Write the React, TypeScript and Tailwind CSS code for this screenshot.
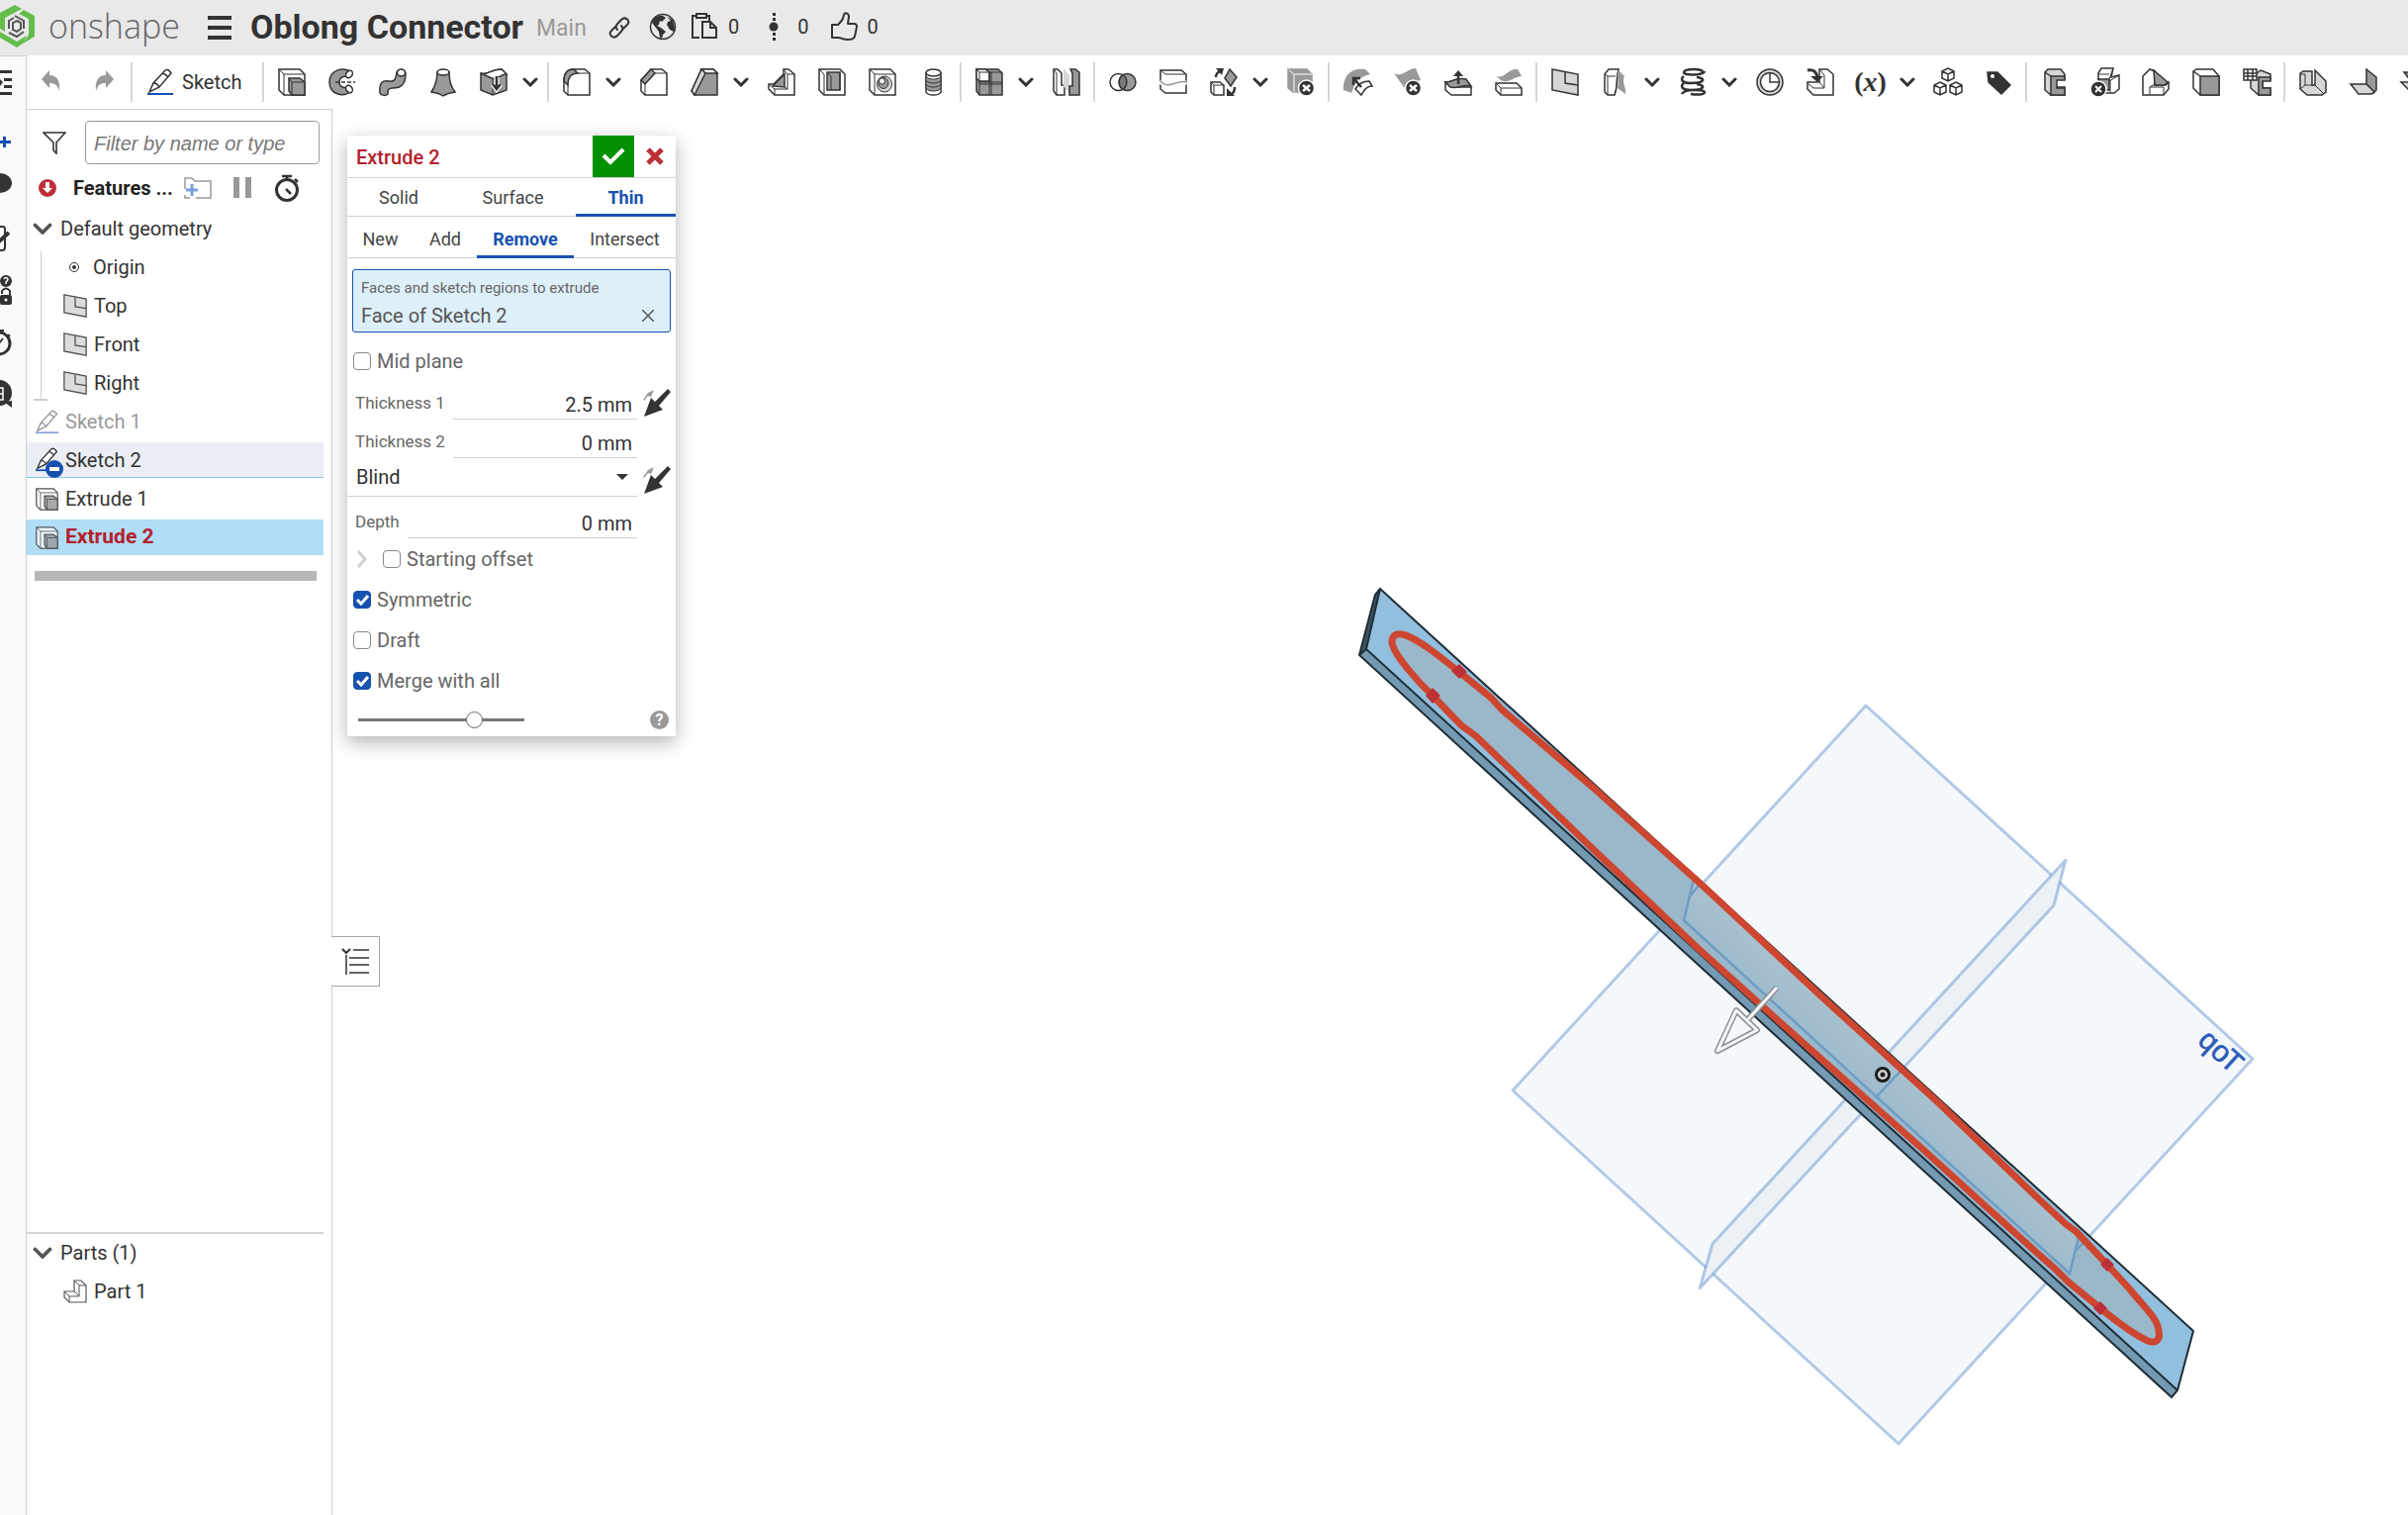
import { useState } from 'react'
import type { ReactNode } from 'react'

const DARK = '#333333'
const MID = '#999999'
const LIGHT = '#d6d6d6'

// Toolbar drawings share a 28 x 28 grid.
const ICONS: Record<string, ReactNode> = {
  undo: <path d="M3 11 L11 2 V7 C19 7 22 13 21 23 C19 17 17 15 11 15 V20 Z" fill={MID} stroke="none" />,
  redo: <path d="M25 11 L17 2 V7 C9 7 6 13 7 23 C9 17 11 15 17 15 V20 Z" fill={MID} stroke="none" />,
  extrude: (
    <>
      <path d="M1 1 H22 L27 6 V27 H6 L1 22 Z" fill="#fff" />
      <path d="M1 1 L6 6 V27 M6 6 H27" strokeWidth="1" />
      <path d="M11 10 H22 L27 14 V27 H14 L11 23 Z" fill={MID} />
      <path d="M11 10 L14 14 V27 M14 14 H26" strokeWidth="1" />
    </>
  ),
  revolve: (
    <>
      <path d="M20 9 L22 3 C15 -1 1 1 1 14 C1 27 15 29 22 24 L20 18 C17 21 11 19 11 14 C11 9 16 7 20 9 Z" fill={MID} />
      <ellipse cx="21" cy="6" rx="3" ry="4" fill="#fff" transform="rotate(35 21 6)" />
      <ellipse cx="21" cy="21" rx="3" ry="4" fill="#fff" transform="rotate(-35 21 21)" />
      <path d="M7 14 H27" strokeDasharray="4 2" />
    </>
  ),
  sweep: (
    <>
      <path d="M1 25 C0 14 4 12 10 13 C16 14 17 11 18 4 C20 0 26 1 27 5 C27 17 22 20 14 20 C9 20 9 22 9 26 C7 28 2 28 1 25 Z" fill={MID} />
      <ellipse cx="22.500" cy="4.500" rx="4" ry="3.500" fill="#fff" />
    </>
  ),
  loft: (
    <>
      <path d="M8 4 C8 12 6 18 2 24 C9 25 11 26 14 28 C17 26 20 25 26 24 C21 18 20 12 20 4 Z" fill={MID} />
      <ellipse cx="14" cy="4" rx="6" ry="3" fill="#fff" />
    </>
  ),
  thicken: (
    <>
      <path d="M1 5 C7 8 10 1 22 1 L27 6 V22 L13 27 L1 22 Z" fill={MID} />
      <path d="M1 5 C7 8 10 1 22 1 L27 6 C20 6 19 12 12 10 Z" fill="#fff" />
      <path d="M13 10 V27" strokeWidth="1" />
      <path d="M17 9 V20 M13 16 L17 21 L21 16" stroke="#fff" strokeWidth="5" />
      <path d="M17 8 V20 M13 16 L17 21 L21 16" strokeWidth="2.500" />
    </>
  ),
  fillet: (
    <>
      <path d="M1 13 C1 5 5 1 11 1 H22 L27 5 V27 H5 L1 23 Z" fill="#fff" />
      <path d="M1 13 C1 5 5 1 11 1 L15 5 C8 5 5 10 5 17 Z" fill={MID} />
      <path d="M5 27 V17 M15 5 H27" strokeWidth="1" />
    </>
  ),
  chamfer: (
    <>
      <path d="M1 12 L11 1 H22 L27 5 V27 H5 L1 23 Z" fill="#fff" />
      <path d="M1 12 L11 1 L15 5 L5 16 Z" fill={MID} />
      <path d="M5 27 V16 M15 5 H27" strokeWidth="1" />
    </>
  ),
  draft: (
    <>
      <path d="M1 23 L11 1 H23 L27 5 V27 H4 Z" fill={MID} />
      <path d="M11 1 H23 L27 5 H15 Z" fill="#fff" />
      <path d="M1 23 L11 1 L15 5 L4 27 Z" fill={LIGHT} />
    </>
  ),
  rib: (
    <>
      <path d="M1 16 H6 L16 6 V1 H21 L27 6 V27 H7 L1 21 Z" fill="#fff" />
      <path d="M5 18 L17 6 V19 Z" fill={MID} />
      <path d="M7 27 V21 H20 V6 M17 19 L20 21 M1 16 L7 21 M16 1 L20 6 H27" strokeWidth="1" />
    </>
  ),
  shell: (
    <>
      <path d="M1 1 H22 L27 6 V27 H6 L1 22 Z" fill="#fff" />
      <path d="M1 1 L6 6 V27" strokeWidth="1" />
      <path d="M9 4 H22 V22 H9 Z" fill={MID} />
      <path d="M9 4 L13 8 V22 M22 4 V22" strokeWidth="1" />
    </>
  ),
  hole: (
    <>
      <path d="M1 1 H22 L27 6 V27 H6 L1 22 Z" fill="#fff" />
      <path d="M1 1 L6 6 V27 M6 6 H27" strokeWidth="1" />
      <ellipse cx="16" cy="16" rx="7.500" ry="8" fill={LIGHT} strokeWidth="1" />
      <ellipse cx="15" cy="15" rx="5" ry="5.500" fill={MID} strokeWidth="1" />
      <circle cx="13.500" cy="13" r="3" fill="#fff" strokeWidth="1" />
    </>
  ),
  thread: (
    <>
      <path d="M7 5 V24 C9 28 20 28 22 24 V5 Z" fill="#fff" />
      <path d="M7 8 C9 12 20 12 22 8 V20 C20 24 9 24 7 20 Z" fill={MID} strokeWidth="1" />
      <path d="M7 12 C9 16 20 16 22 12 M7 16 C9 20 20 20 22 16" strokeWidth="1" />
      <ellipse cx="14.500" cy="4.500" rx="7.500" ry="3.500" fill="#fff" />
    </>
  ),
  pattern: (
    <>
      <path d="M1 1 H23 L27 5 V27 H4 L1 23 Z" fill={MID} />
      <path d="M1 1 H10 L14 4 V13 H4 L1 10 Z" fill="#fff" />
      <path d="M4 27 V4 H27 M1 1 L4 4 M14 4 V27 M16 4 V27 M3 14 H27 M4 16 H27" strokeWidth="1" />
    </>
  ),
  mirror: (
    <>
      <path d="M1 1 H5 L9 5 V17 H12 V27 H4 L1 23 Z" fill="#fff" />
      <path d="M1 1 L4 5 V27" strokeWidth="1" />
      <path d="M11 0 L17 7 V26 L11 18 Z" fill={LIGHT} stroke="none" />
      <path d="M18 1 H23 L27 4 V27 H17 V18 H20 V5 Z" fill={MID} />
    </>
  ),
  boolean: (
    <>
      <circle cx="9.500" cy="14" r="8.500" fill="#fff" />
      <circle cx="18.500" cy="14" r="8.500" fill={MID} />
      <path d="M14 6.500 C19 10 19 18 14 21.500 C9 18 9 10 14 6.500 Z" fill="#7b7b7b" />
    </>
  ),
  split: (
    <>
      <path d="M1 2 H22 L27 6 V25 H6 L1 21 Z" fill="#fff" />
      <path d="M1 2 L6 6 H27" strokeWidth="1" />
      <path d="M0 13 C10 24 16 11 28 15" stroke="#fff" strokeWidth="4" />
      <path d="M0 12 C10 23 16 11 28 14" stroke={MID} />
    </>
  ),
  transform: (
    <>
      <path d="M20 1 L27 9 L21 18 L15 10 Z" fill={MID} />
      <path d="M1 14 H10 L14 17 V27 H4 L1 24 Z" fill="#fff" />
      <path d="M1 14 L4 17 V27 M4 17 H14" strokeWidth="1" />
      <path d="M6 9 C6 5 8 4 10 3 M22 26 C25 24 25 22 25 19" strokeWidth="2.500" />
      <path d="M6 0 H14 L12 7 Z M17 20 V28 H25 Z" fill={DARK} stroke="none" />
    </>
  ),
  deletePart: (
    <>
      <path d="M1 1 H20 L25 6 V24 H6 L1 20 Z" fill={MID} stroke={MID} />
      <path d="M2 2 L7 6 H25 M7 6 V24" stroke="#fff" strokeWidth="1" />
      <circle cx="19.500" cy="20" r="8" fill={DARK} stroke="#fff" />
      <path d="M16 17 L23 23 M23 17 L16 23" stroke="#fff" strokeWidth="2.500" />
    </>
  ),
  modifyFillet: (
    <>
      <path d="M0 22 C-1 6 10 -1 22 1 L27 6 C15 9 12 14 8 25 Z" fill={MID} stroke="none" />
      <path d="M12 21 C15 16 20 13 26 13 L29 18 C23 18 21 22 18 27 Z" fill="#fff" />
      <path d="M10 10 L18 19 M10 17 V10 H17" strokeWidth="2.500" />
    </>
  ),
  deleteFace: (
    <>
      <path d="M0 5 C8 10 14 0 22 0 L27 12 C20 13 18 20 10 19 Z" fill={MID} stroke="none" />
      <circle cx="19.500" cy="20" r="8" fill={DARK} stroke="#fff" />
      <path d="M16 17 L23 23 M23 17 L16 23" stroke="#fff" strokeWidth="2.500" />
    </>
  ),
  moveFace: (
    <>
      <path d="M1 14 L7 19 H27 V27 H7 L1 22 Z" fill="#fff" />
      <path d="M1 14 C8 14 10 9 22 11 L27 18 C18 16 14 21 6 19 Z" fill={MID} />
      <path d="M14 16 V5" strokeWidth="2.500" />
      <path d="M9 8 L14 2 L19 8 Z" fill={DARK} stroke="none" />
    </>
  ),
  replaceFace: (
    <>
      <path d="M1 8 C10 11 13 0 23 1 L27 8 C18 9 14 16 6 12 Z" fill={MID} stroke="none" />
      <path d="M1 15 H22 L27 20 V27 H6 L1 22 Z" fill="#fff" />
      <path d="M1 15 L6 20 V27 M6 20 H27" strokeWidth="1" />
    </>
  ),
  plane: (
    <>
      <path d="M1 1 L27 6 V27 L1 22 Z" fill={LIGHT} />
      <path d="M14 4 V15 L27 17" fill="none" />
    </>
  ),
  frame: (
    <>
      <path d="M3 6 L7 1 H17 C14 10 17 16 13 27 H6 L3 24 Z" fill="#fff" />
      <path d="M17 2 L23 8 C20 14 25 19 24 26 L16 20 C18 12 14 10 17 2 Z" fill={MID} stroke="none" />
      <path d="M3 6 L6 8 H14 M6 8 V27" strokeWidth="1" />
    </>
  ),
  helix: (
    <path
      d="M24 4 C25 0 6 0 5 4 C4 8 26 7 26 3 M5 8 C1 11 3 15 12 15 C27 15 27 10 18 9 M5 15 C1 18 3 22 12 22 C27 22 27 17 18 16 M3 26 C5 21 25 21 26 24 C26 27 18 27 12 26"
      fill="none"
      strokeWidth="2.500"
    />
  ),
  composite: (
    <>
      <circle cx="14" cy="14" r="13" fill={LIGHT} />
      <circle cx="14" cy="14" r="9.500" fill="#fff" />
      <path d="M14 5 V14 H23" fill="none" />
    </>
  ),
  derived: (
    <>
      <path d="M1 14 H13 V1 H21 L27 6 V27 H7 L1 21 Z" fill="#fff" />
      <path d="M1 15 L7 20 H18 V7 L14 2 M13 14 L18 20" strokeWidth="1" />
      <path d="M1 2 C8 1 11 4 11 12" fill="none" strokeWidth="3" />
      <path d="M4 8 H17 L11 14 Z" fill={DARK} stroke="none" />
    </>
  ),
  cubes: (
    <>
      <path d="M14 0 L20 3 V10 L14 13 L8 10 V3 Z M8 3 L14 6 L20 3 M14 6 V13" fill="#fff" />
      <path d="M6 14 L12 17 V24 L6 27 L0 24 V17 Z M0 17 L6 20 L12 17 M6 20 V27" fill="#fff" />
      <path d="M22 14 L28 17 V24 L22 27 L16 24 V17 Z M16 17 L22 20 L28 17 M22 20 V27" fill="#fff" />
    </>
  ),
  tag: (
    <>
      <path d="M3 4 H13 L26 17 L17 26 L4 14 Z" fill={DARK} strokeLinejoin="round" />
      <circle cx="8" cy="8" r="2" fill="#fff" stroke="none" />
    </>
  ),
  cframe: (
    <>
      <path d="M4 4 L7 1 H20 L24 6 V11 H15 V19 H24 V27 H10 L4 22 Z" fill={LIGHT} />
      <path d="M10 8 H24 V12 H16 V20 H24 V27 H10 Z" fill={MID} />
      <path d="M4 4 L10 8" />
    </>
  ),
  deleteFrame: (
    <>
      <path d="M7 5 L10 0 H22 L20 9 L28 7 V21 L23 25 H14 V12 H7 Z" fill="#fff" />
      <path d="M7 11 H18 V22 H10 Z" fill={MID} />
      <path d="M18 11 L22 0 M18 13 L28 7 M7 6 L18 6 M19 12 V24" strokeWidth="1" />
      <circle cx="7" cy="21" r="8" fill={DARK} stroke="#fff" />
      <path d="M4 18 L10 24 M10 18 L4 24" stroke="#fff" strokeWidth="2" />
    </>
  ),
  gusset: (
    <>
      <path d="M1 8 L8 1 L13 3 V17 H24 L27 14 V21 L22 27 H1 Z" fill="#fff" />
      <path d="M12 2 L26 14 L23 17 H13 Z" fill={MID} />
      <path d="M8 27 V19 H22 V27 M8 19 L13 16" strokeWidth="1" />
    </>
  ),
  endCap: (
    <>
      <path d="M1 3 L4 1 H21 L27 8 V27 H8 L1 20 Z" fill="#fff" />
      <path d="M8 8 H27 V27 H8 Z" fill={MID} />
      <path d="M1 3 L8 8" />
    </>
  ),
  cutList: (
    <>
      <path d="M13 6 L18 2 L28 6 V12 H20 V20 H28 V27 H16 L8 20 V8 Z" fill={LIGHT} />
      <path d="M16 9 H28 V13 H20 V20 H28 V27 H16 Z" fill={MID} />
      <path d="M1 1 H14 V12 H1 Z M5 1 V12 M10 1 V12 M1 5 H14 M1 8 H14" fill="#fff" />
    </>
  ),
  sheetMetal: (
    <>
      <path d="M1 5 L4 3 H13 V17 H16 V2 L27 13 V24 L23 27 H8 L1 21 Z" fill={LIGHT} />
      <path d="M1 6 H6 V17 L1 21 M6 17 H13 M16 17 L25 26" strokeWidth="1" />
    </>
  ),
  flange: (
    <>
      <path d="M17 1 L27 9 V22 L24 25 L17 16 Z" fill={MID} />
      <path d="M17 16 H1 L9 26 H22 L25 24 Z" fill={LIGHT} />
    </>
  ),
  bend: (
    <>
      <path d="M1 14 H18 L27 24 H11 Z" fill={LIGHT} />
      <path d="M4 4 H18 L24 12 H10 Z" fill={MID} />
    </>
  ),
}

const TOOLS = [
  'extrude', 'revolve', 'sweep', 'loft', 'thicken', '>', '|',
  'fillet', '>', 'chamfer', 'draft', '>', 'rib', 'shell', 'hole', 'thread', '|',
  'pattern', '>', 'mirror', '|',
  'boolean', 'split', 'transform', '>', 'deletePart', '|',
  'modifyFillet', 'deleteFace', 'moveFace', 'replaceFace', '|',
  'plane', 'frame', '>', 'helix', '>', 'composite', 'derived', 'variable', '>', 'cubes', 'tag', '|',
  'cframe', 'deleteFrame', 'gusset', 'endCap', 'cutList', '|',
  'sheetMetal', 'flange', 'bend',
]

function Glyph({ name, className = 'size-7' }: { name: string; className?: string }) {
  return (
    <svg viewBox="0 0 28 28" className={`shrink-0 overflow-visible ${className}`} stroke={DARK} strokeWidth="1.500" fill="none" aria-hidden="true">
      {ICONS[name]}
    </svg>
  )
}

function ChevronDown({ className = 'w-4', color = DARK }: { className?: string; color?: string }) {
  return (
    <svg viewBox="0 0 16 10" className={`shrink-0 ${className}`} fill="none" stroke={color} strokeWidth="3" strokeLinecap="round" aria-hidden="true">
      <path d="M2 2 L8 8 L14 2" />
    </svg>
  )
}

function Pencil({ className = 'size-7' }: { className?: string }) {
  return (
    <svg viewBox="0 0 28 28" className={`shrink-0 ${className}`} fill="none" stroke={DARK} strokeWidth="1.500" aria-hidden="true">
      <path d="M3 24 L7 15 L19 2 Q22 0 25 5 L13 19 L3 24 Z M7 15 Q11 15 13 19 M16 5 Q20 6 22 9" fill="#fff" />
      <path d="M1 26 H27" stroke="#1651b0" strokeWidth="2" />
    </svg>
  )
}

function Separator() {
  return <div className="mx-[2px] h-10 w-[2px] shrink-0 bg-[#d6d6d6]" />
}

function Toolbar() {
  return (
    <div className="flex h-[54px] shrink-0 items-center overflow-hidden bg-white">
      <button type="button" aria-label="Undo" className="grid w-[51px] shrink-0 place-items-center">
        <Glyph name="undo" />
      </button>
      <button type="button" aria-label="Redo" className="grid w-[52px] shrink-0 place-items-center">
        <Glyph name="redo" />
      </button>
      <Separator />
      <button type="button" className="flex w-[127px] shrink-0 items-center gap-2 pl-3 text-xl">
        <Pencil /> Sketch
      </button>
      <Separator />
      {TOOLS.map((tool, i) => {
        if (tool === '|') return <Separator key={i} />
        if (tool === '>') {
          return (
            <button key={i} type="button" aria-label="More tools" className="w-[27px] shrink-0 pl-[4px]">
              <ChevronDown />
            </button>
          )
        }
        return (
          <button key={i} type="button" aria-label={tool} className="grid w-[51px] shrink-0 place-items-center">
            {tool === 'variable' ? (
              <span className="font-['Liberation_Serif',serif] text-[28px] leading-7 font-bold">
                (<i>x</i>)
              </span>
            ) : (
              <Glyph name={tool} />
            )}
          </button>
        )
      })}
    </div>
  )
}

function Header() {
  return (
    <header className="flex h-14 shrink-0 items-center bg-[#e9e9e9] pb-[3px] text-[#333]">
      <svg viewBox="0 0 35 44" className="h-11 w-[35px] shrink-0" aria-hidden="true">
        <path d="M0 8 L15 0 L22 4 L5 13 V27 L0 24 Z" fill="#63be4c" />
        <path d="M24 5 L35 11 V32 L23 39 L29 30 V14 L19 9 Z" fill="#63be4c" />
        <path d="M0 27 L17 37 L27 31 L24 38 L17 43 L0 33 Z" fill="#63be4c" />
        <path d="M15 11 L24 16 V24 M9 24 V16 L14 13 M24 27 L17 32 L9 28 M17 16 L21 18 V24 L17 27 L13 25 V18 Z" fill="none" stroke="#555" strokeWidth="2" />
      </svg>
      <span className="ml-[14px] w-[131px] pb-[2px] font-['Open_Sans',sans-serif] text-[34px] leading-10 font-light text-[#666]">onshape</span>
      <button type="button" aria-label="Document menu" className="ml-[30px] flex w-6 flex-col gap-[6px] pt-[3px]">
        <span className="h-1 bg-[#333]" />
        <span className="h-1 bg-[#333]" />
        <span className="h-1 bg-[#333]" />
      </button>
      <h1 className="ml-[19px] w-[277px] text-[34px] leading-10 font-bold whitespace-nowrap">Oblong Connector</h1>
      <span className="ml-3 w-[50px] pt-[5px] text-[23px] text-[#999]">Main</span>
      <button type="button" aria-label="Copy link" className="ml-[22px] pt-[3px]">
        <svg viewBox="0 0 24 24" className="size-6" fill="none" stroke={DARK} strokeWidth="2" strokeLinecap="round">
          <path d="M10 14 C7 11 9 9 14 4 C18 0 24 5 20 9 L16 13 M14 10 C17 13 15 15 10 20 C6 24 0 19 4 15 L8 11" />
        </svg>
      </button>
      <button type="button" aria-label="Public document" className="ml-[18px]">
        <svg viewBox="0 0 28 28" className="size-7" fill={DARK}>
          <circle cx="14" cy="14" r="12.500" fill="none" stroke={DARK} strokeWidth="1.500" />
          <path d="M4 7 C7 3 11 2 14 3 L17 5 L13 9 L11 8 L10 12 L8 13 L12 15 L17 19 L14 22 L13 26 L11 25 L10 19 L7 15 L3 10 Z" />
          <path d="M18 4 L24 7 L26 15 L25 19 L21 17 L18 12 L19 9 L22 8 Z" />
        </svg>
      </button>
      <button type="button" className="ml-[14px] flex items-center gap-[10px] text-xl">
        <svg viewBox="0 0 28 28" className="size-7" fill="none" stroke={DARK} strokeWidth="2">
          <path d="M9 25 H2 V3 H6 M19 8 V3 H16 M6 1 H16 V5 H6 Z" />
          <path d="M12 9 H20 L26 15 V25 H12 Z M20 9 V15 H26" />
        </svg>
        0
      </button>
      <button type="button" className="ml-[26px] flex items-center gap-[15px] text-xl">
        <svg viewBox="0 0 18 28" className="h-7 w-[18px]" fill={DARK}>
          <circle cx="9" cy="14" r="4.500" />
          <path d="M8 0 H11 V3 H8 Z M8 5 H11 V8 H8 Z M8 20 H11 V23 H8 Z M8 25 H11 V28 H8 Z" />
        </svg>
        0
      </button>
      <button type="button" className="ml-[21px] flex items-center gap-[10px] text-xl">
        <svg viewBox="0 0 28 30" className="h-[30px] w-7" fill="none" stroke={DARK} strokeWidth="2" strokeLinejoin="round">
          <path d="M2 13 H8 C13 8 13 7 14 3 C15 0 19 1 19 5 L18 12 H25 C28 13 27 15 26 20 C25 26 25 28 18 28 C12 28 12 26 8 26 H2 Z" />
        </svg>
        0
      </button>
    </header>
  )
}

function Rail() {
  return (
    <nav aria-label="Side tools" className="w-[27px] shrink-0 border-t border-r border-[#d0d0d0] bg-[#fafafa]">
      <svg viewBox="0 57 26 370" className="w-[26px]" fill={DARK} aria-hidden="true">
        <path d="M0 71 H12 V74 H0 Z M4 79 H12 V82 H4 Z M4 86 H12 V89 H4 Z M0 93 H12 V96 H0 Z M0 80 L3 83 L0 87 Z" />
        <path d="M0 142 H3 V138 H6 V142 H11 V145 H6 V149 H3 V145 H0 Z" fill="#1651b0" />
        <ellipse cx="0" cy="185" rx="12" ry="10" />
        <path d="M0 229 H3 Q5 229 5 232 V250 Q5 253 2 253 H0" fill="none" stroke={DARK} strokeWidth="2" />
        <path d="M-1 244 L9 235" stroke={DARK} strokeWidth="4" />
        <circle cx="6" cy="284" r="6" />
        <path d="M4 282 Q6 279 8 282 Q8 284 6 285 V287" stroke="#fff" strokeWidth="1.500" fill="none" />
        <path d="M2 297 V294 Q6 289 10 294 V298" fill="none" stroke={DARK} strokeWidth="2" />
        <rect x="0" y="298" width="12" height="10" rx="2" />
        <circle cx="6" cy="303" r="1.500" fill="#fff" />
        <circle cx="-1" cy="347" r="11" fill="none" stroke={DARK} strokeWidth="3" />
        <path d="M0 334 H4 M8 338 L10 340 M-1 347 L3 342" stroke={DARK} strokeWidth="2" />
        <circle cx="-1" cy="397" r="13" />
        <path d="M4 406 L12 412 V405 Z" />
        <path d="M0 392 H3 V404 H0 M0 398 H3" stroke="#fff" strokeWidth="1.500" fill="none" />
      </svg>
    </nav>
  )
}

function TreeRow({ icon, label, className = 'text-xl' }: { icon: ReactNode; label: string; className?: string }) {
  return (
    <li>
      <button type="button" className={`flex h-9 w-full items-center text-left ${className}`}>
        {icon}
        {label}
      </button>
    </li>
  )
}

function FeaturePanel() {
  return (
    <aside className="flex w-[309px] shrink-0 flex-col border-t border-r border-[#d0d0d0] bg-white pr-2">
      <div className="flex items-center pt-[11px]">
        <button type="button" aria-label="Filter" className="ml-4">
          <svg viewBox="0 0 24 24" className="size-6" fill="none" stroke={DARK} strokeWidth="1.600">
            <path d="M1 2 H23 L14 12 V23 L11 20 V12 Z" />
          </svg>
        </button>
        <input
          aria-label="Filter by name or type"
          placeholder="Filter by name or type"
          className="mr-[4px] ml-[19px] h-11 w-0 flex-1 rounded-[4px] border border-[#999] px-2 pt-[2px] font-['Liberation_Sans',sans-serif] text-xl italic placeholder:text-[#777]"
        />
      </div>
      <div className="flex h-[47px] items-center pl-3">
        <svg viewBox="0 0 18 18" className="size-[18px]" aria-hidden="true">
          <circle cx="9" cy="9" r="9" fill="#bd3038" />
          <path d="M7 3 H11 V9 H14 L9 14 L4 9 H7 Z" fill="#fff" />
        </svg>
        <h2 className="ml-[17px] w-[112px] text-xl font-bold whitespace-nowrap text-[#222]">Features ...</h2>
        <button type="button" aria-label="Add folder">
          <svg viewBox="0 0 28 22" className="h-[22px] w-7" fill="none" stroke={MID} strokeWidth="1.500">
            <path d="M1 12 V1 H8 L11 4 H27 V21 H12 M1 18 V21 H6" />
            <path d="M2 13 H14 M8 7 V19" stroke="#7b9fd6" strokeWidth="3" />
          </svg>
        </button>
        <button type="button" aria-label="Pause" className="ml-[22px] flex gap-[6px]">
          <span className="h-[21px] w-[6px] bg-[#999]" />
          <span className="h-[21px] w-[6px] bg-[#999]" />
        </button>
        <button type="button" aria-label="Regeneration times" className="ml-[23px]">
          <svg viewBox="0 0 26 28" className="h-7 w-[26px]" fill="none" stroke={DARK} strokeWidth="3">
            <circle cx="13" cy="16" r="10.500" />
            <path d="M8 2 H18 M13 2 V5 M21 5 L24 8" strokeWidth="2.500" />
            <path d="M12 15 L17 20" strokeWidth="2.500" />
          </svg>
        </button>
      </div>

      <ul className="flex flex-1 flex-col gap-[3px] text-[#333]">
        <TreeRow icon={<ChevronDown className="mr-2 ml-[6px] w-[20px]" color="#555" />} label="Default geometry" />
        <li className="flex">
          <div className="mt-[2px] ml-[7px] flex w-[14px] flex-col items-center">
            <div className="w-px flex-1 bg-[#ccc]" />
            <div className="h-[2px] w-full bg-[#ccc]" />
          </div>
          <ul className="flex flex-1 flex-col gap-[3px]">
            <TreeRow
              className="pl-[22px] text-xl"
              icon={
                <svg viewBox="0 0 10 10" className="mr-[14px] size-[10px] overflow-visible" aria-hidden="true">
                  <circle cx="5" cy="5" r="4.500" fill="none" stroke={DARK} />
                  <circle cx="5" cy="5" r="2" fill={DARK} />
                </svg>
              }
              label="Origin"
            />
            {['Top', 'Front', 'Right'].map((name) => (
              <TreeRow key={name} className="pl-4 text-xl" icon={<Glyph name="plane" className="mr-[7px] size-[24px] opacity-85" />} label={name} />
            ))}
          </ul>
        </li>
        <TreeRow className="pl-2 text-xl text-[#999]" icon={<Pencil className="mr-[6px] size-[25px] opacity-50" />} label="Sketch 1" />
        <TreeRow
          className="border-b border-[#87c6ee] bg-[#eaeef4] pl-2 text-xl"
          icon={
            <span className="relative mr-[6px]">
              <Pencil className="size-[25px]" />
              <span className="absolute -right-1 -bottom-[6px] grid size-[18px] place-items-center rounded-full bg-[#1651b0]">
                <span className="h-1 w-[10px] bg-white" />
              </span>
            </span>
          }
          label="Sketch 2"
        />
        <TreeRow className="pl-[9px] text-xl" icon={<Glyph name="extrude" className="mr-[7px] size-[23px] opacity-85" />} label="Extrude 1" />
        <TreeRow
          className="bg-[#b1ddf6] pl-[9px] text-[21px] font-bold text-[#b3202c]"
          icon={<Glyph name="extrude" className="mr-[7px] size-[23px] opacity-80" />}
          label="Extrude 2"
        />
        <li className="mr-[7px] ml-2 mt-[13px] h-[10px] bg-[#b7b7b7]" />
      </ul>

      <section className="h-[286px] shrink-0 border-t-2 border-[#d3d3d3] pt-px text-[#333]">
        <ul className="flex flex-col gap-[3px]">
          <TreeRow icon={<ChevronDown className="mr-2 ml-[6px] w-[20px]" color="#555" />} label="Parts (1)" />
          <TreeRow
            className="pl-[37px] text-xl"
            icon={
              <svg viewBox="0 0 24 24" className="mr-[7px] size-6" fill="#fff" stroke="#555" strokeWidth="1.200" aria-hidden="true">
                <path d="M1 12 H11 V1 H18 L23 6 V23 H6 L1 18 Z" />
                <path d="M1 12 L6 17 H16 L11 12 M16 17 V6 L11 1 M16 6 H23 M6 17 V23" fill="none" strokeWidth="1" />
              </svg>
            }
            label="Part 1"
          />
        </ul>
      </section>
    </aside>
  )
}

function FlipArrow() {
  return (
    <button type="button" aria-label="Flip direction" className="block w-7 pt-1">
      <svg viewBox="0 0 28 28" className="block size-7" fill={DARK}>
        <path d="M1 28 L8 9 L12 13 L25 0 L28 3 L16 17 L20 21 Z" />
        <path d="M0 11 L5 4 L11 1 L8 8 L5 7 L1 12 Z" fill={MID} />
      </svg>
    </button>
  )
}

function CheckRow({ label, initial = false }: { label: string; initial?: boolean }) {
  const [on, setOn] = useState(initial)
  return (
    <label className="flex h-[41px] items-center gap-[6px] text-xl text-[#666]">
      <span className="grid size-[18px] *:col-start-1 *:row-start-1">
        <input
          type="checkbox"
          checked={on}
          onChange={() => setOn(!on)}
          className="size-[18px] appearance-none rounded-[4px] border border-[#888] bg-white checked:border-[#1651b0] checked:bg-[#1651b0]"
        />
        {on && (
          <svg viewBox="0 0 18 18" className="pointer-events-none size-[18px]" fill="none" stroke="#fff" strokeWidth="3" aria-hidden="true">
            <path d="M4 9 L8 13 L15 5" />
          </svg>
        )}
      </span>
      {label}
    </label>
  )
}

function ValueRow({ id, label, value, flip }: { id: string; label: string; value: string; flip?: boolean }) {
  return (
    <div className="flex h-[39px] items-center pr-[5px] pl-2">
      <label htmlFor={id} className="mt-[7px] mr-2 text-[17px] text-[#666]">
        {label}
      </label>
      <input
        id={id}
        defaultValue={value}
        className="h-[39px] w-0 flex-1 border-b border-[#d0d0d0] pt-[9px] pr-[5px] text-right text-xl text-[#333]"
      />
      <div className="ml-[6px] w-7 shrink-0">{flip && <FlipArrow />}</div>
    </div>
  )
}

const TAB_ON = 'border-[#1651b0] font-bold text-[#1651b0]'
const TAB_OFF = 'border-transparent text-[#444]'

function Tab({ label, on, className }: { label: string; on?: boolean; className: string }) {
  return (
    <button type="button" role="tab" aria-selected={!!on} className={`-mb-px border-b-[3px] text-[18px] ${on ? TAB_ON : TAB_OFF} ${className}`}>
      {label}
    </button>
  )
}

function ExtrudeDialog() {
  return (
    <section aria-label="Extrude 2" className="absolute top-[27px] left-[15px] w-[332px] bg-white shadow-[0_6px_18px_rgba(0,0,0,0.3)]">
      <div className="flex h-[43px] items-center border-b border-[#d0d0d0] pl-[9px]">
        <h2 className="flex-1 pt-[2px] text-xl font-medium text-[#b3202c]">Extrude 2</h2>
        <button type="button" aria-label="Accept" className="grid size-[42px] place-items-center bg-[#039103]">
          <svg viewBox="0 0 24 18" className="w-6" fill="none" stroke="#fff" strokeWidth="4">
            <path d="M2 8 L9 15 L22 2" />
          </svg>
        </button>
        <button type="button" aria-label="Cancel" className="grid size-[42px] place-items-center">
          <svg viewBox="0 0 18 18" className="size-[18px]" fill="none" stroke="#bd3038" strokeWidth="5">
            <path d="M2 2 L16 16 M16 2 L2 16" />
          </svg>
        </button>
      </div>
      <div role="tablist" className="flex h-[39px] border-b border-[#d0d0d0]">
        <Tab label="Solid" className="w-[104px] pt-[2px]" />
        <Tab label="Surface" className="w-[127px] pt-[2px]" />
        <Tab label="Thin" on className="flex-1 pt-[2px]" />
      </div>
      <div role="tablist" className="flex h-[42px] border-b border-[#d0d0d0]">
        <Tab label="New" className="w-[67px] pt-[6px]" />
        <Tab label="Add" className="w-16 pt-[6px]" />
        <Tab label="Remove" on className="w-[98px] pt-[6px]" />
        <Tab label="Intersect" className="flex-1 pt-[6px]" />
      </div>

      <div className="mx-[5px] mt-[11px] h-16 rounded-[3px] border border-[#1651b0] bg-[#ddeff9] px-2 pt-1">
        <div className="text-[15px] leading-7 text-[#666]">Faces and sketch regions to extrude</div>
        <div className="flex items-center justify-between text-xl leading-7 text-[#555]">
          Face of Sketch 2
          <button type="button" aria-label="Remove selection" className="mr-2">
            <svg viewBox="0 0 12 12" className="size-3" stroke="#555" strokeWidth="1.500">
              <path d="M0 0 L12 12 M12 0 L0 12" />
            </svg>
          </button>
        </div>
      </div>

      <div className="mt-2 pl-[6px]">
        <CheckRow label="Mid plane" />
      </div>
      <ValueRow id="thickness-1" label="Thickness 1" value="2.5 mm" flip />
      <ValueRow id="thickness-2" label="Thickness 2" value="0 mm" />
      <div className="mb-[3px] flex h-[39px] items-center pr-[5px]">
        <div className="grid h-[39px] flex-1 items-center border-b border-[#d0d0d0] *:col-start-1 *:row-start-1">
          <select aria-label="End type" className="w-full appearance-none pl-[9px] text-xl text-[#333]">
            <option>Blind</option>
            <option>Through all</option>
          </select>
          <svg viewBox="0 0 12 6" className="pointer-events-none mr-[9px] w-3 justify-self-end" fill={DARK} aria-hidden="true">
            <path d="M0 0 H12 L6 6 Z" />
          </svg>
        </div>
        <div className="ml-[6px] w-7">
          <FlipArrow />
        </div>
      </div>
      <ValueRow id="depth" label="Depth" value="0 mm" />

      <div className="flex items-center gap-4 pl-[10px]">
        <button type="button" aria-label="Expand starting offset">
          <svg viewBox="0 0 10 18" className="h-[18px] w-[10px]" fill="none" stroke="#d0d0d0" strokeWidth="3">
            <path d="M1 1 L8 9 L1 17" />
          </svg>
        </button>
        <CheckRow label="Starting offset" />
      </div>
      <div className="pl-[6px]">
        <CheckRow label="Symmetric" initial />
        <CheckRow label="Draft" />
        <CheckRow label="Merge with all" initial />
      </div>
      <div className="flex h-9 items-center justify-between pt-[3px] pr-[7px] pl-[11px]">
        <input
          type="range"
          aria-label="Preview opacity"
          defaultValue={72}
          className="h-[3px] w-[168px] appearance-none bg-[#777] [&::-webkit-slider-thumb]:size-[17px] [&::-webkit-slider-thumb]:appearance-none [&::-webkit-slider-thumb]:rounded-full [&::-webkit-slider-thumb]:border [&::-webkit-slider-thumb]:border-[#666] [&::-webkit-slider-thumb]:bg-white"
        />
        <button type="button" aria-label="Help" className="grid size-[19px] place-items-center rounded-full bg-[#999] text-base leading-none font-bold text-white">
          ?
        </button>
      </div>
    </section>
  )
}

const SLOT =
  'M1417 641 C1409 640 1405 645 1408 653 C1411 663 1432 688 1448 703 L1477 733 L1492 744 L1607 855 L1717 959 L1797 1031 L1942 1160 L2060 1267 L2077 1282 L2090 1295 L2123 1322 C2140 1336 2160 1350 2171 1355 C2178 1358 2184 1355 2182 1345 C2181 1332 2168 1322 2153 1303 L2130 1278 L2099 1245 L2088 1237 L2060 1211 L1960 1115 L1840 1006 L1720 894 L1607 793 L1518 717 L1507 705 L1475 679 C1455 663 1430 643 1417 641 Z'

function ModelView() {
  return (
    <svg viewBox="336 110 2098 1421" preserveAspectRatio="xMinYMin slice" className="absolute inset-0 size-full" fill="none" role="img" aria-label="Part preview">
      <defs>
        <clipPath id="slot">
          <path d={SLOT} />
        </clipPath>
        <linearGradient id="front" gradientUnits="userSpaceOnUse" x1="1920" y1="1065" x2="1890" y2="1098">
          <stop offset="0" stopColor="#abc2cf" />
          <stop offset="1" stopColor="#9fbccd" />
        </linearGradient>
      </defs>
      <g stroke="#5b8fcb" strokeOpacity="0.45" strokeWidth="3" strokeLinejoin="round">
        <path d="M1886 713 L2277 1070 L1919 1459 L1529 1102 Z" fill="#f4f8fb" />
        <path d="M2088 869 L2076 915 L1718 1302 L1731 1257 Z" fill="#ebf1f5" />
      </g>

      <path d="M1381 656 L2201 1405 L2195 1412 L1374 662 Z" fill="#7399b3" />
      <path d="M1395 595 L1390 601 L1374 662 L1381 656 Z" fill="#3b5361" />
      <path d="M1395 595 L2217 1345 L2201 1405 L1381 656 Z" fill="#92bfdd" />
      <path d={SLOT} fill="#9ab8ca" />
      <g clipPath="url(#slot)">
        <path d="M1711 888 L1702 930 L2092 1287 L2101 1250 Z" fill="url(#front)" />
        <path d="M1712 888 L1702 930 L2092 1287 L2101 1250 M1925 1078 L1897 1108 M1722 889 L1707 907 M2115 1246 L2098 1264" stroke="#6c9cc6" strokeWidth="2.500" />
      </g>
      <path
        d="M1395 595 L2217 1345 L2201 1405 L2195 1412 L1374 662 L1390 601 Z M1395 595 L1381 656 L2201 1405 M1381 656 L1374 662"
        stroke="#1f2d35"
        strokeWidth="2"
      />
      <path d={SLOT} stroke="#cd4630" strokeWidth="7" strokeLinejoin="round" />
      <g fill="#bd3038">
        <path d="M1475 671 L1483 679 L1475 686 L1467 678 Z M1448 695 L1456 703 L1448 711 L1441 703 Z M2130 1271 L2137 1278 L2130 1285 L2123 1278 Z M2123 1315 L2130 1322 L2123 1329 L2116 1322 Z" />
      </g>

      <path d="M1796 998 L1767 1030 M1736 1062 L1755 1021 L1776 1041 Z" stroke="#8b9095" strokeWidth="6" strokeLinejoin="round" />
      <path d="M1796 998 L1767 1030 M1736 1062 L1755 1021 L1776 1041 Z" stroke="#f4f6f8" strokeWidth="3" strokeLinejoin="round" />
      <circle cx="1903" cy="1086" r="6.500" fill="#d3d5d2" stroke="#1c1c1c" strokeWidth="3" />
      <circle cx="1903" cy="1086" r="2.500" fill="#1c1c1c" />
      <text
        transform="matrix(-0.738 -0.675 -0.677 0.735 2256 1086)"
        className="font-['Liberation_Sans',sans-serif] text-[30px]"
        fill="#2b5cb8"
        stroke="#2b5cb8"
        strokeWidth="0.600"
      >
        Top
      </text>
    </svg>
  )
}

export default function App() {
  return (
    <div className="flex h-screen flex-col overflow-hidden bg-white font-[Roboto,sans-serif] text-[#333]">
      <Header />
      <div className="flex min-h-0 flex-1">
        <Rail />
        <div className="flex min-w-0 flex-1 flex-col">
          <Toolbar />
          <div className="flex min-h-0 flex-1">
            <FeaturePanel />
            <main className="relative flex-1">
              <ModelView />
              <ExtrudeDialog />
              <button
                type="button"
                aria-label="Toggle feature list"
                className="absolute top-[836px] -left-px grid h-[51px] w-[49px] place-items-center border border-l-0 border-[#a5a5a5] bg-white"
              >
                <svg viewBox="0 0 28 28" className="size-7" fill="none" stroke={DARK} strokeWidth="1.700">
                  <path d="M1 1 L5 5 L9 1" strokeWidth="2" />
                  <path d="M12 2 H28 M8 10 H28 M8 17 H28 M8 25 H28" />
                  <path d="M5 7 V27" stroke="#666" strokeWidth="2" />
                </svg>
              </button>
            </main>
          </div>
        </div>
      </div>
    </div>
  )
}
